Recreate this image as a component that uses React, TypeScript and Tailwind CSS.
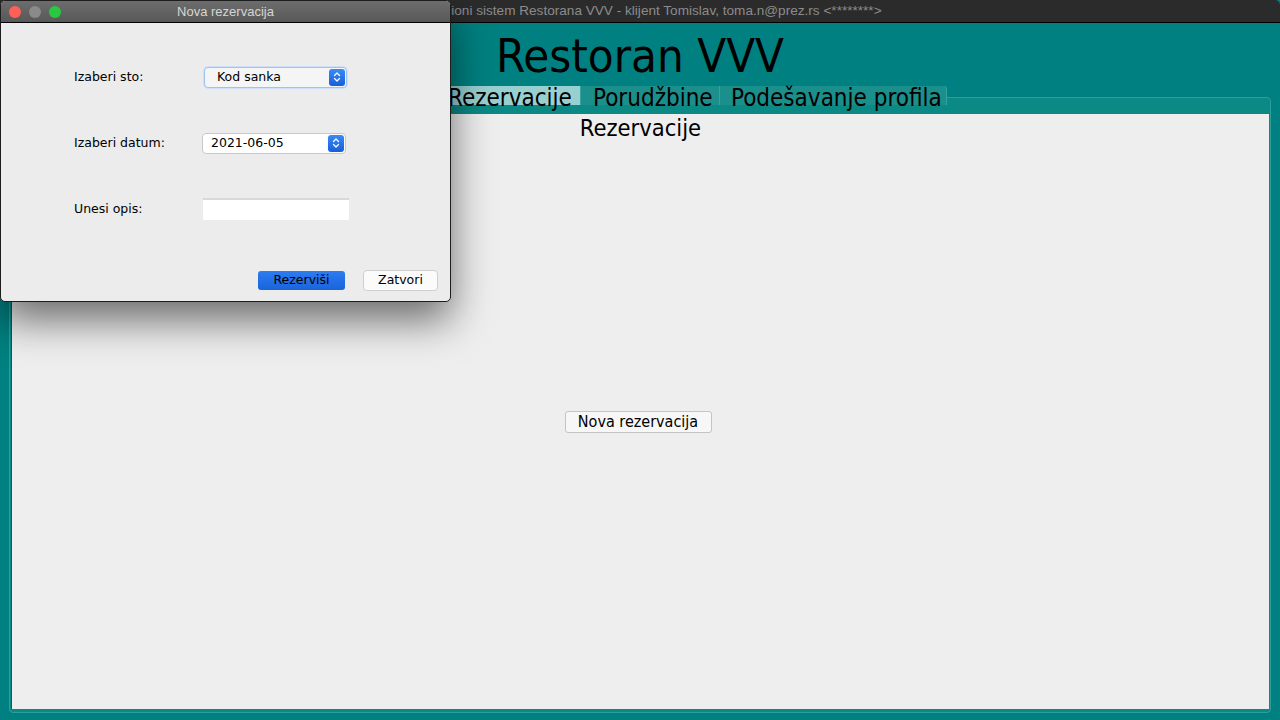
import React from "react";

const tahoma = { fontFamily: '"DejaVu Sans Condensed", "DejaVu Sans", sans-serif' };
const lucida = { fontFamily: '"DejaVu Sans", "Liberation Sans", sans-serif' };

function Stepper() {
  return (
    <div className="flex h-full w-[16px] items-center justify-center rounded-[3px] bg-gradient-to-b from-[#3a8af7] to-[#1660d8]">
      <svg width="8" height="12" viewBox="0 0 8 12" fill="none" stroke="white" strokeWidth="1.3" strokeLinecap="round" strokeLinejoin="round">
        <path d="M1.5 4.5 L4 2 L6.5 4.5" />
        <path d="M1.5 7.5 L4 10 L6.5 7.5" />
      </svg>
    </div>
  );
}

export default function App() {
  return (
    <div className="relative h-[720px] w-[1280px] overflow-hidden bg-[#008080]">
      {/* main window */}
      <div className="flex h-full flex-col">
        <div className="flex h-[23px] shrink-0 items-center justify-center rounded-tr-[5px] border-b border-black bg-[#2b2b2b] text-[13.6px] text-[#8b8b8b]" style={{ fontFamily: '"Liberation Sans", sans-serif' }}>
          Informacioni sistem Restorana VVV - klijent Tomislav, toma.n@prez.rs &lt;********&gt;
        </div>
        <div className="flex h-[63px] shrink-0 items-center justify-center pt-[2px] text-[47px] leading-none text-black" style={tahoma}>
          Restoran VVV
        </div>
        <div className="relative z-10 -mb-[8px] flex h-[19px] shrink-0 justify-center text-[24px] leading-none text-black" style={tahoma}>
          <div className="flex h-[19px] w-[247px] items-start bg-[#98cfcf] pl-[115px] pt-[0px]">Rezervacije</div>
          <div className="flex h-[19px] w-[139px] items-start border-l border-[#33a3a0] bg-[#1a8f8b] pl-[12px] pt-[0px]">Porudžbine</div>
          <div className="flex h-[19px] w-[228px] items-start rounded-tr-[3px] border-l border-r border-[#33a3a0] bg-[#1a8f8b] pl-[11px] pt-[0px]">Podešavanje profila</div>
        </div>
        <div className="mx-[9px] mb-[7px] flex flex-1 flex-col rounded-[4px] border border-[#2a9f9b] bg-[#0b8985] px-[1px] pb-[3px] pt-[16px]">
          <div className="flex flex-1 flex-col items-center border-l border-[#0a5e5b] bg-[#eeeeee]">
            <div className="mt-[3px] h-[25px] text-[23.5px] leading-none text-black" style={tahoma}>Rezervacije</div>
            <button className="mr-[5px] mt-[269px] h-[22px] w-[147px] rounded-[3px] border border-[#c4c4c4] bg-[#f7f7f7] text-[16px] leading-none text-black" style={tahoma}>
              Nova rezervacija
            </button>
          </div>
        </div>
      </div>

      {/* dialog */}
      <div className="absolute left-0 top-0 z-20 flex h-[302px] w-[451px] flex-col overflow-hidden rounded-[5px] border border-[#1d1d1d] bg-[#ececec] shadow-[0_18px_40px_rgba(0,0,0,0.55)]" style={lucida}>
        <div className="relative flex h-[22px] shrink-0 items-center justify-center border-b border-black bg-gradient-to-b from-[#6d6d6d] to-[#585858] text-[13px] text-[#d6d6d6]" style={{ fontFamily: '"Liberation Sans", sans-serif' }}>
          <div className="absolute left-[8px] top-[5px] flex gap-[8px]">
            <div className="h-[12px] w-[12px] rounded-full bg-[#fe5f57]" />
            <div className="h-[12px] w-[12px] rounded-full bg-[#8a8a8a]" />
            <div className="h-[12px] w-[12px] rounded-full bg-[#28c840]" />
          </div>
          Nova rezervacija
        </div>
        <div className="flex flex-1 flex-col pl-[73px] pt-[43px] text-[12.5px] text-black">
          <div className="flex h-[22px] items-center">
            <div className="w-[130px]">Izaberi sto:</div>
            <div className="flex h-[21px] w-[143px] items-center justify-between rounded-[4px] border border-[#9cc3f2] bg-[#f5f5f5] p-[1px] pl-[12px] shadow-[0_0_0_1px_#cfe1f8]">
              <span>Kod sanka</span>
              <Stepper />
            </div>
          </div>
          <div className="mt-[44px] flex h-[22px] items-center">
            <div className="w-[128px]">Izaberi datum:</div>
            <div className="flex h-[21px] w-[144px] items-center justify-between rounded-[4px] border border-[#c8c8c8] bg-white p-[1px] pl-[8px]">
              <span>2021-06-05</span>
              <Stepper />
            </div>
          </div>
          <div className="mt-[44px] flex h-[22px] items-center">
            <div className="w-[129px]">Unesi opis:</div>
            <div className="h-[22px] w-[146px] border-t-2 border-[#d8d8d8] bg-white" />
          </div>
          <div className="mt-[50px] flex justify-end gap-[18px] pr-[12px]">
            <button className="mt-[1px] h-[19px] w-[87px] rounded-[3px] bg-gradient-to-b from-[#2d7cf0] to-[#1a63dc] text-[12.5px] text-black">Rezerviši</button>
            <button className="h-[21px] w-[75px] rounded-[4px] border border-[#cfcfcf] bg-[#fbfbfb] text-[12.5px] text-black">Zatvori</button>
          </div>
        </div>
      </div>
    </div>
  );
}
